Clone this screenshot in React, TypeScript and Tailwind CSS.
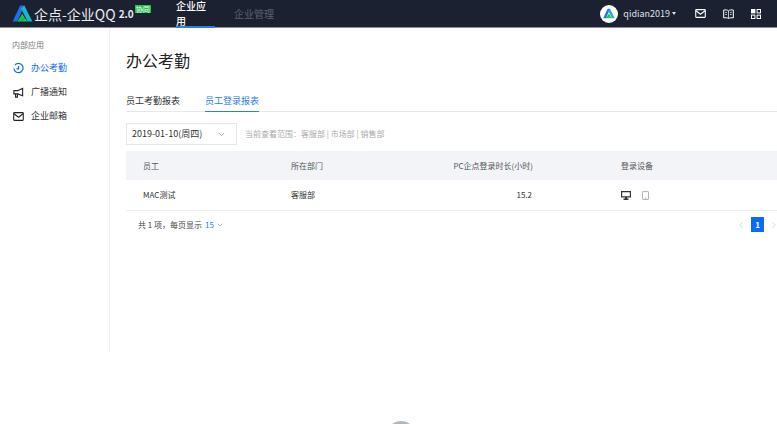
import {ChevronDown, ChevronLeft, ChevronRight} from 'lucide-react';

const Logo = ({className}: {className: string}) => (
    <svg viewBox="0 0 22 18" className={className}>
        <path d="M0.5 17.5 L8.5 0.5 H13 L5.5 17.5 Z" fill="#1f6fe8"/>
        <path d="M13 0.5 L21.5 17.5 H16.5 L9.5 4 Z" fill="#17b4d8"/>
        <path d="M5.5 17.5 L10.8 9 L13.5 13.8 L9.5 17.5 Z" fill="#19c24a"/>
        <path d="M16.5 17.5 H9.5 L13.5 13.8 Z" fill="#27c93f"/>
    </svg>
);

const ClockIcon = () => (
    <svg viewBox="0 0 12 12" className="w-[11px] h-[11px]" fill="none" stroke="#0a6cf5" strokeWidth="1.3">
        <path d="M2.2 2.2 A5 5 0 1 1 1 6"/>
        <path d="M6 3.2 V6.4 H3.8"/>
    </svg>
);

const MegaphoneIcon = () => (
    <svg viewBox="0 0 12 12" className="w-[11px] h-[11px]" fill="none" stroke="#222" strokeWidth="1.2">
        <path d="M1 4 H5 L10.5 1.5 V9.5 L5 7.5 H1 Z"/>
        <path d="M2.8 7.5 V11 H4.8 V7.5"/>
    </svg>
);

const MailIcon = ({className, stroke}: {className: string; stroke: string}) => (
    <svg viewBox="0 0 12 10" className={className} fill="none" stroke={stroke} strokeWidth="1.2">
        <rect x="0.7" y="0.7" width="10.6" height="8.6" rx="0.6"/>
        <path d="M1 2 L6 5.8 L11 2"/>
    </svg>
);

const BookIcon = () => (
    <svg viewBox="0 0 12 11" className="w-[11px] h-[10px]" fill="none" stroke="#fff" strokeWidth="1.1">
        <path d="M6 2 C4.5 0.8 2.5 0.8 0.7 1.1 V9.8 C2.5 9.5 4.5 9.5 6 10.4 C7.5 9.5 9.5 9.5 11.3 9.8 V1.1 C9.5 0.8 7.5 0.8 6 2 Z"/>
        <path d="M6 2 V10.4 M2.4 3.8 H4.4 M2.4 6 H4.4 M7.6 3.8 H9.6 M7.6 6 H9.6" strokeWidth="0.8"/>
    </svg>
);

const GridIcon = () => (
    <svg viewBox="0 0 10 10" className="w-[10px] h-[10px]" fill="none" stroke="#fff">
        <rect x="0.5" y="0.5" width="3.4" height="3.4" fill="#fff"/>
        <rect x="6.1" y="0.5" width="3.4" height="3.4"/>
        <rect x="0.5" y="6.1" width="3.4" height="3.4"/>
        <rect x="6.1" y="6.1" width="3.4" height="3.4"/>
    </svg>
);

const DesktopIcon = () => (
    <svg viewBox="0 0 10 9" className="w-[10px] h-[9px]">
        <path d="M0 0 H10 V6.4 H6 V7.6 H7.5 V9 H2.5 V7.6 H4 V6.4 H0 Z M1.2 1.2 V5.2 H8.8 V1.2 Z" fill="#333" fillRule="evenodd"/>
    </svg>
);

const TabletIcon = () => (
    <svg viewBox="0 0 8 10" className="w-[7px] h-[9px]" fill="none" stroke="#999" strokeWidth="0.9">
        <rect x="0.5" y="0.5" width="7" height="9" rx="0.8"/>
        <path d="M3 8 H5"/>
    </svg>
);

const Header = () => (
    <div className="h-[28px] shrink-0 bg-[#1b2130] border-b border-b-[#8a8d94] flex items-center text-white">
        <div className="flex items-center w-[176px] pl-[12px]">
            <Logo className="w-[21px] h-[17px]"/>
            <span className="ml-[1px] text-[14px] leading-none text-[#e8eaee]">企点-企业QQ</span>
            <span className="ml-[3px] text-[10px] leading-none font-semibold text-[#e8eaee]">2.0</span>
            <span className="ml-[1px] mb-[10px] px-[1px] bg-[#1fc14b] text-[7px] leading-[8px] text-white">协同</span>
        </div>
        <div className="h-full w-[39px] flex items-center justify-center text-[10px] font-medium text-white border-b-2 border-b-[#2b7de9] -mb-[1px]">企业应用</div>
        <div className="ml-[19px] text-[10px] text-[#5b6270]">企业管理</div>
        <div className="ml-auto flex items-center">
            <div className="w-[18px] h-[18px] rounded-full bg-white flex items-center justify-center">
                <Logo className="w-[12px] h-[11px]"/>
            </div>
            <span className="ml-[5px] text-[9px] text-[#dfe2e8]">qidian2019</span>
            <span className="ml-[2px] w-0 h-0 border-x-[2.5px] border-x-transparent border-t-[3px] border-t-[#dfe2e8]"></span>
            <div className="ml-[19px] flex items-center gap-[17px] pr-[16px]">
                <MailIcon className="w-[11px] h-[9px]" stroke="#fff"/>
                <BookIcon/>
                <GridIcon/>
            </div>
        </div>
    </div>
);

const Sidebar = () => (
    <div className="w-[110px] h-[324px] shrink-0 border-r border-r-[#eceef2] pt-[11px]">
        <div className="pl-[12px] text-[8px] leading-[12px] text-[#777]">内部应用</div>
        <div className="mt-[5px] h-[24px] pl-[13px] flex items-center gap-[7px] text-[9px] text-[#0a6cf5]">
            <ClockIcon/>办公考勤
        </div>
        <div className="h-[24px] pl-[13px] flex items-center gap-[7px] text-[9px] text-[#333]">
            <MegaphoneIcon/>广播通知
        </div>
        <div className="h-[24px] pl-[13px] flex items-center gap-[7px] text-[9px] text-[#333]">
            <MailIcon className="w-[11px] h-[9px]" stroke="#222"/>企业邮箱
        </div>
    </div>
);

const Main = () => (
    <div className="flex-1 min-w-0 pl-[16px]">
        <h1 className="mt-[21px] text-[16px] leading-[22px] font-normal text-[#222]">办公考勤</h1>
        <div className="mt-[24px] h-[17px] border-b border-b-[#e6e8ec] flex gap-[25px] text-[9px] leading-[12px]">
            <div className="text-[#333]">员工考勤报表</div>
            <div className="h-[17px] text-[#2b7de9] border-b border-b-[#2b7de9]">员工登录报表</div>
        </div>
        <div className="mt-[11px] flex items-center">
            <div className="w-[111px] h-[22px] border border-[#e3e6eb] pl-[5px] pr-[10px] flex items-center justify-between text-[9px] text-[#333]">
                2019-01-10(周四)
                <ChevronDown className="w-[9px] h-[9px] text-[#888]"/>
            </div>
            <div className="ml-[8px] text-[8px] text-[#aaa]">当前查看范围：客服部 | 市场部 | 销售部</div>
        </div>
        <div className="mt-[6px] h-[29px] bg-[#f3f4f8] flex items-center text-[8px] text-[#555]">
            <div className="w-[165px] pl-[17px]">员工</div>
            <div className="w-[142px]">所在部门</div>
            <div className="w-[100px] text-right">PC企点登录时长(小时)</div>
            <div className="pl-[88px]">登录设备</div>
        </div>
        <div className="h-[31px] border-b border-b-[#eceef2] flex items-center text-[8px] text-[#333]">
            <div className="w-[165px] pl-[17px]">MAC测试</div>
            <div className="w-[142px]">客服部</div>
            <div className="w-[100px] text-right pr-[1px]">15.2</div>
            <div className="pl-[88px] flex items-center gap-[11px]">
                <DesktopIcon/>
                <TabletIcon/>
            </div>
        </div>
        <div className="mt-[6px] h-[15px] flex items-center pl-[12px] text-[8px] text-[#444]">
            共 1 项，每页显示
            <span className="ml-[3px] text-[#2b7de9]">15</span>
            <ChevronDown className="ml-[2px] w-[8px] h-[8px] text-[#888]"/>
            <div className="ml-auto flex items-center">
                <ChevronLeft className="w-[10px] h-[10px] text-[#ccc]"/>
                <span className="mx-[5px] w-[13px] h-[15px] bg-[#0a6cf5] text-white font-semibold flex items-center justify-center">1</span>
                <ChevronRight className="w-[10px] h-[10px] text-[#ccc] -mr-[2px]"/>
            </div>
        </div>
    </div>
);

const App = () => {
    return (
        <div className="relative w-[777px] h-[424px] overflow-hidden bg-white flex flex-col font-['Noto_Sans_CJK_SC','Liberation_Sans',sans-serif]">
            <Header/>
            <div className="flex flex-1 min-h-0">
                <Sidebar/>
                <Main/>
            </div>
            {/* loading spinner peeking in at the bottom edge */}
            <div className="absolute left-[386px] top-[421px] w-[30px] h-[30px] rounded-full bg-[#b4b6bf]"></div>
        </div>
    );
};

export default App;
